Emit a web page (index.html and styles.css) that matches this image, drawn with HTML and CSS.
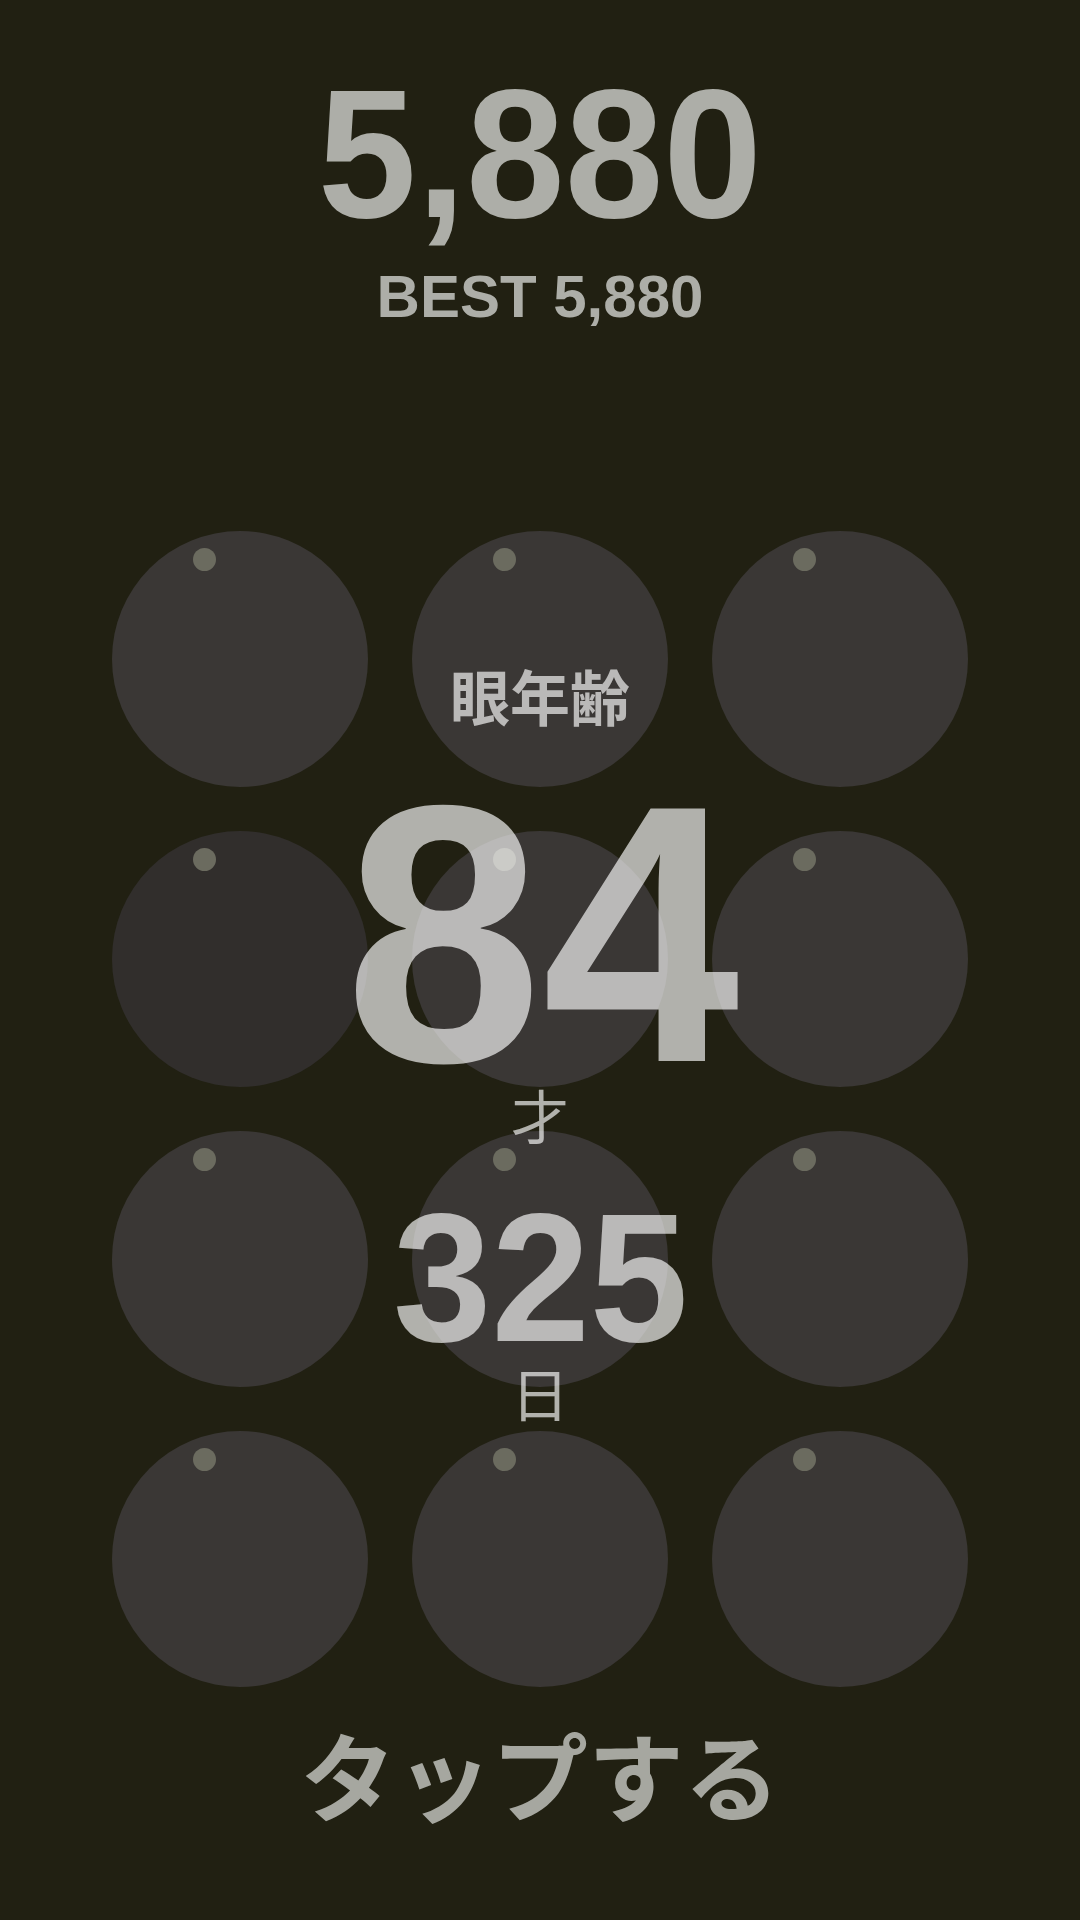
FILE: index.html
```html
<!DOCTYPE html>
<html lang="ja">
<head>
<meta charset="utf-8">
<title>眼年齢</title>
<link rel="stylesheet" href="styles.css">
</head>
<body>
<main class="app">
  <header class="score">
    <div class="score-value">5,880</div>
    <div class="best">BEST 5,880</div>
  </header>
  <section class="board">
    <div class="grid">
      <div class="ball"></div>
      <div class="ball"></div>
      <div class="ball"></div>
      <div class="ball ball-dim"></div>
      <div class="ball"></div>
      <div class="ball"></div>
      <div class="ball"></div>
      <div class="ball"></div>
      <div class="ball"></div>
      <div class="ball"></div>
      <div class="ball"></div>
      <div class="ball"></div>
    </div>
    <div class="result">
      <div class="result-label">眼年齢</div>
      <div class="result-years">84</div>
      <div class="result-unit unit-years">才</div>
      <div class="result-days">325</div>
      <div class="result-unit unit-days">日</div>
    </div>
  </section>
  <div class="tap">タップする</div>
</main>
</body>
</html>
```
FILE: styles.css
```css
html, body {
  margin: 0;
  padding: 0;
  background: #212012;
}
body {
  width: 1080px;
  height: 1920px;
  overflow: hidden;
  font-family: "Liberation Sans", Arial, "Noto Sans CJK JP", sans-serif;
  color: rgba(255, 255, 255, 0.65);
}
.app {
  display: flex;
  flex-direction: column;
  align-items: center;
  padding-top: 62px;
}
.score {
  display: flex;
  flex-direction: column;
  align-items: center;
}
.score-value {
  font-size: 183px;
  font-weight: 700;
  line-height: 1;
  transform: scaleX(0.97);
  color: #adaea8;
}
.best {
  margin-top: 22px;
  font-size: 60px;
  font-weight: 700;
  line-height: 1;
  color: #adaea8;
}
.board {
  position: relative;
  margin-top: 204px;
}
.grid {
  display: grid;
  grid-template-columns: repeat(3, 256px);
  grid-auto-rows: 256px;
  gap: 44px;
}
.ball {
  position: relative;
  border-radius: 50%;
  background: #3a3735;
}
.ball::after {
  content: "";
  position: absolute;
  left: 81px;
  top: 17px;
  width: 23px;
  height: 23px;
  border-radius: 50%;
  background: #6b6b5f;
}
.ball-dim {
  background: #312e2c;
}
.result {
  position: absolute;
  inset: 0;
  display: flex;
  flex-direction: column;
  align-items: center;
  padding-top: 134px;
}
.result-label {
  font-family: "Noto Sans CJK JP", sans-serif;
  font-size: 60px;
  font-weight: 700;
  line-height: 1;
}
.result-years {
  margin-top: 26px;
  margin-left: 4px;
  font-size: 367px;
  font-weight: 700;
  line-height: 1;
  transform: scaleX(0.967);
}
.result-unit {
  font-family: "Noto Sans CJK JP", sans-serif;
  font-size: 58px;
  font-weight: 400;
  line-height: 1;
}
.unit-years {
  margin-top: -33px;
}
.result-days {
  margin-top: 43px;
  margin-left: 2px;
  font-size: 183px;
  font-weight: 700;
  line-height: 1;
  transform: scaleX(0.967);
}
.unit-days {
  margin-top: -6px;
}
.tap {
  margin-top: 38px;
  font-family: "Noto Sans CJK JP", sans-serif;
  font-size: 96px;
  font-weight: 700;
  line-height: 1;
  color: #a6a7a0;
}
```
